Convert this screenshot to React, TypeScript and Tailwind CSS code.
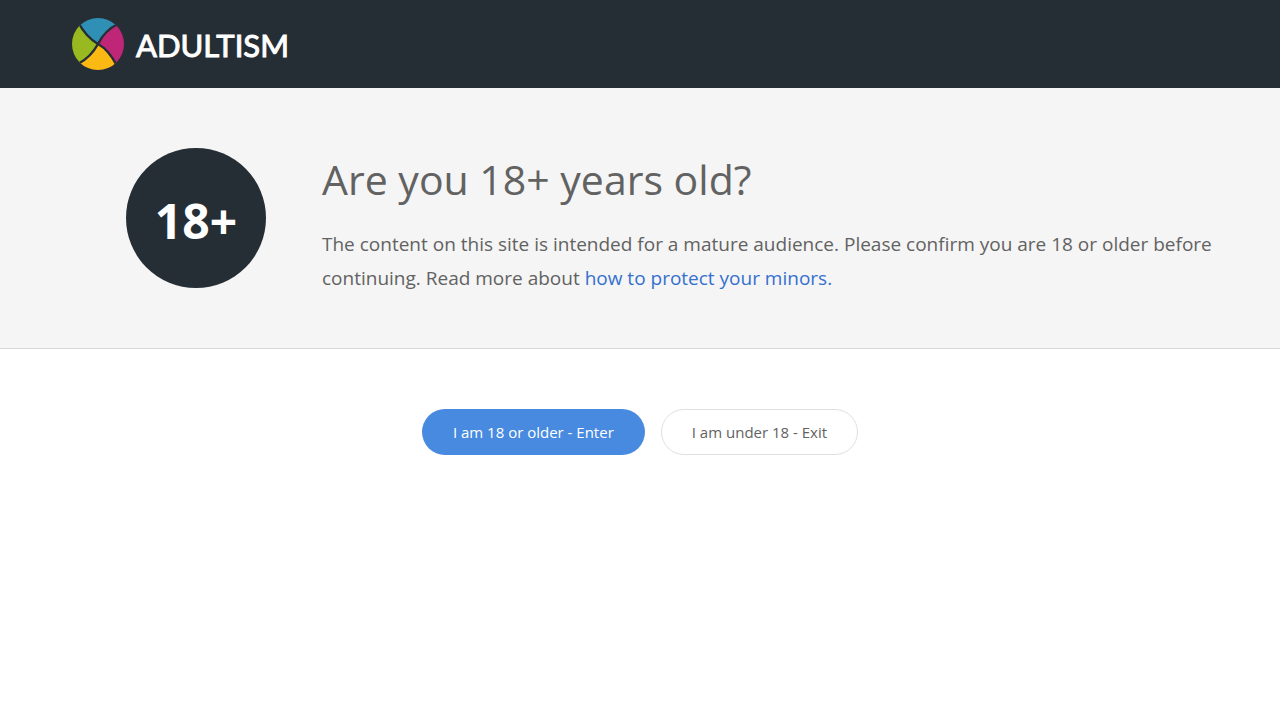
function Logo() {
  return (
    <a href="#" aria-label="Adultism" className="flex items-center gap-3">
      <svg viewBox="6 6 52 52" className="size-[52px]" aria-hidden="true">
        <defs>
          <clipPath id="disc">
            <circle cx="32" cy="32" r="26" />
          </clipPath>
        </defs>
        <g clipPath="url(#disc)">
          <path fill="#2f8fb5" d="M12 10Q20 25 32 32Q39 18 52 12V0H12Z" />
          <path fill="#c02677" d="M52 12Q39 18 32 32Q43 38 51 54H64V12Z" />
          <path fill="#fdb913" d="M51 54Q43 38 32 32Q25 45 12 52V64H51Z" />
          <path fill="#98b91f" d="M12 52Q25 45 32 32Q20 25 12 10H0V52Z" />
          <g fill="none" stroke="#262e35" strokeWidth="2.4">
            <path d="M12 10Q20 25 32 32Q43 38 51 54" />
            <path d="M52 12Q39 18 32 32Q25 45 12 52" />
          </g>
        </g>
      </svg>
      <span className="pt-0.5 font-['Lato',sans-serif] text-[31px] leading-none text-white [-webkit-text-stroke:1px_white] [stroke-linejoin:round]">
        ADULTISM
      </span>
    </a>
  );
}

export default function App() {
  return (
    <div className="min-h-screen bg-white font-['Open_Sans',sans-serif] text-[#626262]">
      <header className="bg-[#262e35] px-[72px] py-[18px]">
        <Logo />
      </header>

      <main>
        <section className="border-b border-[#d8d8d8] bg-[#f5f5f5] pt-[60px] pr-14 pb-[53px] pl-[126px]">
          <div className="flex gap-14">
            <div className="flex size-[140px] shrink-0 items-center justify-center rounded-full bg-[#262e35] pt-1.5 text-5xl font-bold text-white">
              18+
            </div>
            <div>
              <h1 className="text-[41px] leading-[62px]">Are you 18+ years old?</h1>
              <p className="mt-[17px] text-[19px] leading-[34px]">
                The content on this site is intended for a mature audience. Please confirm you are 18 or older before
                continuing. Read more about{" "}
                <a href="#" className="text-[#3570cf]">how to protect your minors.</a>
              </p>
            </div>
          </div>
        </section>

        <div className="flex flex-wrap justify-center gap-4 py-[60px]">
          <button className="h-[46px] rounded-full bg-[#478ae0] px-[31px] text-[15px] text-white">
            I am 18 or older - Enter
          </button>
          <button className="h-[46px] rounded-full border border-[#e0e0e0] px-[30px] text-[15px]">
            I am under 18 - Exit
          </button>
        </div>
      </main>
    </div>
  );
}
